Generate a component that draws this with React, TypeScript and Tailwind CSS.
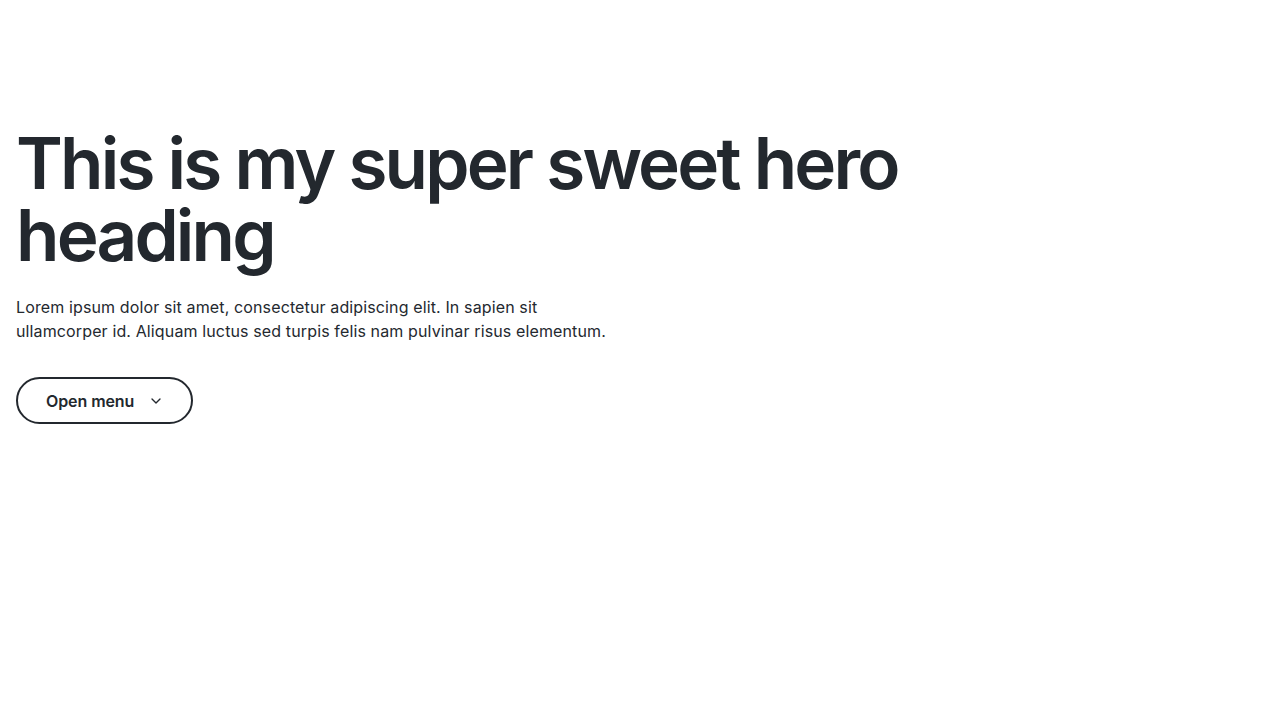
import React from 'react';
import { ChevronDown } from 'lucide-react';

const App: React.FC = () => {
  return (
    <div className="min-h-screen bg-white px-4 pt-[127px] text-[#23282e]" style={{ fontFamily: 'Inter, "Noto Sans", sans-serif' }}>
      <h1 className="max-w-[1000px] text-[71px] font-semibold leading-[72px] tracking-[-0.04em]">
        This is my super sweet hero heading
      </h1>
      <p className="mt-[24px] max-w-[610px] text-[16px] leading-6 tracking-[0.008em] text-[#24292f]">
        Lorem ipsum dolor sit amet, consectetur adipiscing elit. In sapien sit ullamcorper id. Aliquam luctus sed turpis felis nam pulvinar risus elementum.
      </p>
      <button className="mt-[34px] flex h-[47px] items-center gap-[14px] rounded-full border-2 border-[#23282e] pl-[28px] pr-[27px] text-[16px] font-semibold tracking-[-0.005em]">
        Open menu
        <ChevronDown className="h-4 w-4" strokeWidth={2} />
      </button>
    </div>
  );
};

export default App;
